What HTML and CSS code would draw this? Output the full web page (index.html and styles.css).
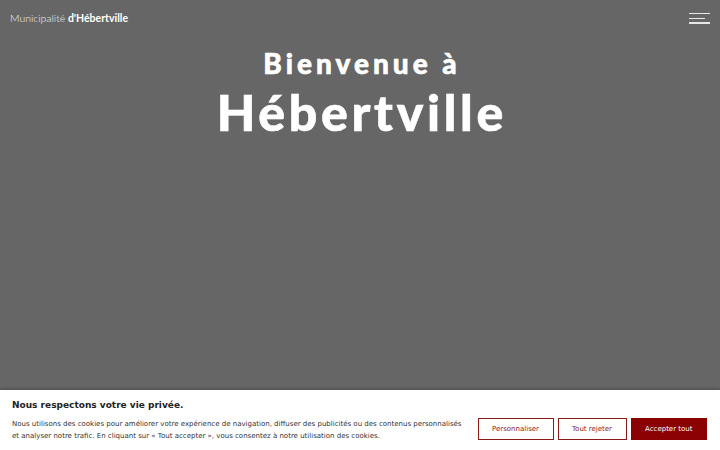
FILE: index.html
```html
<!DOCTYPE html>
<html lang="fr">
<head>
<meta charset="utf-8">
<title>Municipalité d'Hébertville</title>
<link rel="stylesheet" href="styles.css">
</head>
<body>
<div class="page">
  <header class="topbar">
    <div class="logo"><span class="logo-light">Municipalité</span> <span class="logo-bold">d'Hébertville</span></div>
    <button class="burger" aria-label="Menu">
      <span class="bar"></span>
      <span class="bar bar-short"></span>
      <span class="bar"></span>
    </button>
  </header>
  <section class="hero">
    <h1 class="hero-title">
      <span class="hero-small">Bienvenue à</span>
      <span class="hero-big">Hébertville</span>
    </h1>
  </section>
</div>
<div class="cookie">
  <div class="cookie-text">
    <p class="cookie-title">Nous respectons votre vie privée.</p>
    <p class="cookie-body">Nous utilisons des cookies pour améliorer votre expérience de navigation, diffuser des publicités ou des contenus personnalisés et analyser notre trafic. En cliquant sur « Tout accepter », vous consentez à notre utilisation des cookies.</p>
  </div>
  <div class="cookie-actions">
    <button class="btn btn-outline">Personnaliser</button>
    <button class="btn btn-outline">Tout rejeter</button>
    <button class="btn btn-fill">Accepter tout</button>
  </div>
</div>
</body>
</html>
```
FILE: styles.css
```css
* { box-sizing: border-box; }
html, body { margin: 0; padding: 0; }
body {
  width: 720px;
  height: 450px;
  overflow: hidden;
  background: #666666;
  font-family: "Lato", "DejaVu Sans", sans-serif;
  position: relative;
}
.page { height: 450px; }
.topbar {
  display: flex;
  justify-content: space-between;
  align-items: flex-start;
  padding: 11px 10px 0 10px;
}
.logo {
  color: #f2f2f2;
  font-size: 10.5px;
  line-height: 14px;
}
.logo-light { font-weight: 300; }
.logo-bold { font-weight: 700; color: #fff; }
.burger {
  display: flex;
  flex-direction: column;
  gap: 3.3px;
  background: none;
  border: 0;
  padding: 0;
  margin: 2px 0 0 0;
  width: 21px;
  align-items: flex-start;
}
.bar {
  display: block;
  width: 21px;
  height: 1.4px;
  background: #e6e6e6;
}
.bar-short { width: 16px; }
.hero {
  display: flex;
  justify-content: center;
  padding-top: 19px;
}
.hero-title {
  margin: 0;
  color: #fff;
  font-weight: 900;
  text-align: center;
  display: flex;
  flex-direction: column;
  align-items: center;
  -webkit-text-stroke: 0.6px #fff;
}
.hero-small {
  font-size: 28px;
  line-height: 38px;
  letter-spacing: 4px;
  padding-left: 4px;
}
.hero-big {
  font-size: 50px;
  line-height: 60px;
  letter-spacing: 3.7px;
  padding-left: 3.7px;
}
.cookie {
  position: absolute;
  left: 0;
  right: 0;
  bottom: 0;
  height: 60px;
  background: #fff;
  box-shadow: 0 -1px 3px rgba(0,0,0,0.25);
  display: flex;
  align-items: flex-start;
  justify-content: space-between;
  padding: 0 13px 0 12px;
  font-family: "DejaVu Sans", sans-serif;
}
.cookie-text { width: 455px; padding-top: 9px; }
.cookie-title {
  margin: 0 0 6px 0;
  font-size: 9px;
  font-weight: 700;
  color: #222;
  line-height: 13px;
}
.cookie-body {
  margin: 0;
  font-size: 7px;
  line-height: 12px;
  color: #333;
}
.cookie-actions {
  display: flex;
  gap: 4px;
  padding-top: 28px;
}
.btn {
  font-family: "DejaVu Sans", sans-serif;
  font-size: 7px;
  height: 22px;
  padding: 0 13.5px;
  border: 1px solid #8b1a1a;
  background: #fff;
  color: #8b1a1a;
  cursor: pointer;
}
.btn-fill {
  background: #8b0000;
  border-color: #8b0000;
  color: #fff;
}
```
